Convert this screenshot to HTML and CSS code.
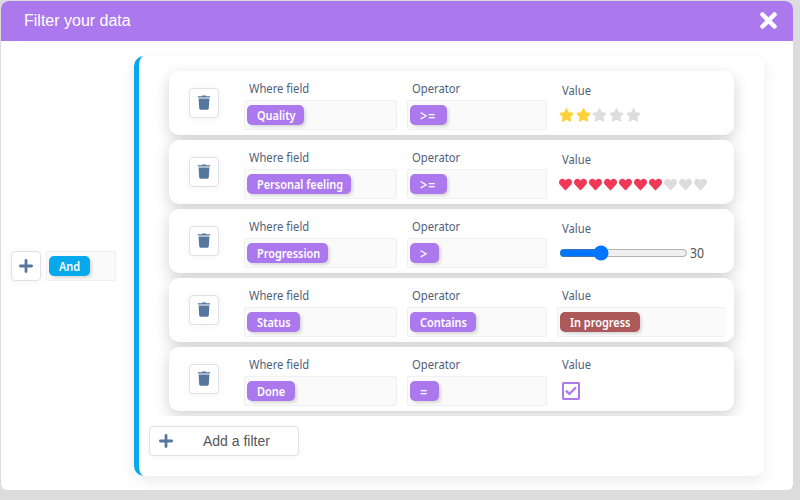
FILE: index.html
```html
<!DOCTYPE html>
<html lang="en">
<head>
<meta charset="utf-8">
<title>Filter your data</title>
<link rel="stylesheet" href="styles.css">
</head>
<body>
<svg width="0" height="0" class="defs">
  <symbol id="trash" viewBox="0 0 14 16"><path d="M4.500 1.200 5.200.5h3.600l.7.700h3.300q.4 0 .4.400v1H.8v-1q0-.4.4-.4zM1.600 3.500h10.800l-.6 9.800q-.1 1.400-1.400 1.400H3.600q-1.300 0-1.400-1.400z"/></symbol>
  <symbol id="plus" viewBox="0 0 12 12"><path d="M6 1.200v9.600M1.200 6h9.600" stroke="currentColor" stroke-width="2.400" stroke-linecap="round"/></symbol>
  <symbol id="star" viewBox="0 0 576 512"><path d="M259.300 17.800 194 150.200 47.900 171.500c-26.200 3.800-36.700 36.100-17.700 54.600l105.700 103-25 145.500c-4.500 26.300 23.200 46 46.400 33.700L288 439.600l130.700 68.700c23.200 12.200 50.900-7.400 46.400-33.700l-25-145.500 105.700-103c19-18.500 8.500-50.800-17.700-54.600L382 150.200 316.700 17.800c-11.700-23.600-45.600-23.900-57.400 0z"/></symbol>
  <symbol id="heart" viewBox="0 0 512 512"><path d="M462.300 62.600C407.500 15.900 326 24.300 275.700 76.200L256 96.500l-19.700-20.300C186.100 24.300 104.500 15.900 49.700 62.600c-62.800 53.600-66.100 149.800-9.900 207.900l193.500 199.800c12.500 12.900 32.800 12.900 45.300 0l193.500-199.800c56.300-58.100 53-154.300-9.800-207.900z"/></symbol>
</svg>
<main class="dialog">
  <header class="bar"><span>Filter your data</span>
    <svg class="close" viewBox="0 0 18 18"><path d="M3.300 3.300l11.400 11.400M14.700 3.300L3.300 14.700"/></svg>
  </header>
  <div class="content">
    <div class="logic">
      <button class="btn"><svg class="plus"><use href="#plus"/></svg></button>
      <div class="field small"><span class="tag blue w-and"><b>And</b></span></div>
    </div>
    <section class="group">
      <div class="rows">
        <article class="card">
          <button class="btn"><svg class="trash"><use href="#trash"/></svg></button>
          <div class="col where"><label>Where field</label><div class="field"><span class="tag w-quality"><b>Quality</b></span></div></div>
          <div class="col op"><label>Operator</label><div class="field"><span class="tag sign w-ge"><b>&gt;=</b></span></div></div>
          <div class="col value low"><label>Value</label><div class="rating stars"><svg class="on"><use href="#star"/></svg><svg class="on"><use href="#star"/></svg><svg><use href="#star"/></svg><svg><use href="#star"/></svg><svg><use href="#star"/></svg></div></div>
        </article>
        <article class="card">
          <button class="btn"><svg class="trash"><use href="#trash"/></svg></button>
          <div class="col where"><label>Where field</label><div class="field"><span class="tag w-feeling"><b>Personal feeling</b></span></div></div>
          <div class="col op"><label>Operator</label><div class="field"><span class="tag sign w-ge"><b>&gt;=</b></span></div></div>
          <div class="col value low"><label>Value</label><div class="rating hearts"><svg class="on"><use href="#heart"/></svg><svg class="on"><use href="#heart"/></svg><svg class="on"><use href="#heart"/></svg><svg class="on"><use href="#heart"/></svg><svg class="on"><use href="#heart"/></svg><svg class="on"><use href="#heart"/></svg><svg class="on"><use href="#heart"/></svg><svg><use href="#heart"/></svg><svg><use href="#heart"/></svg><svg><use href="#heart"/></svg></div></div>
        </article>
        <article class="card">
          <button class="btn"><svg class="trash"><use href="#trash"/></svg></button>
          <div class="col where"><label>Where field</label><div class="field"><span class="tag w-progression"><b>Progression</b></span></div></div>
          <div class="col op"><label>Operator</label><div class="field"><span class="tag sign w-gt"><b>&gt;</b></span></div></div>
          <div class="col value low"><label>Value</label><div class="range"><input type="range" min="0" max="100" value="30"><span>30</span></div></div>
        </article>
        <article class="card">
          <button class="btn"><svg class="trash"><use href="#trash"/></svg></button>
          <div class="col where"><label>Where field</label><div class="field"><span class="tag w-status"><b>Status</b></span></div></div>
          <div class="col op"><label>Operator</label><div class="field"><span class="tag w-contains"><b>Contains</b></span></div></div>
          <div class="col value"><label>Value</label><div class="field open"><span class="tag red w-in"><b>In progress</b></span></div></div>
        </article>
        <article class="card">
          <button class="btn"><svg class="trash"><use href="#trash"/></svg></button>
          <div class="col where"><label>Where field</label><div class="field"><span class="tag w-done"><b>Done</b></span></div></div>
          <div class="col op"><label>Operator</label><div class="field"><span class="tag sign w-gt"><b>=</b></span></div></div>
          <div class="col value"><label>Value</label><svg class="check" viewBox="0 0 18 18"><rect x="1" y="1" width="16" height="16" rx=".7"/><path d="M4 8.700l3.400 3.300L14 5.300"/></svg></div>
        </article>
      </div>
      <button class="btn add"><svg class="plus"><use href="#plus"/></svg><span>Add a filter</span></button>
    </section>
  </div>
</main>
</body>
</html>
```
FILE: styles.css
```css
* { box-sizing: border-box; }
body {
  margin: 0;
  height: 500px;
  overflow: hidden;
  padding: 1px 7px 10px 1px;
  background: #dcdcdc;
  font: 12px/16px "Noto Sans", sans-serif;
  color: #506078;
}
svg { display: block; flex: none; fill: currentColor; }
.defs { position: absolute; }
.dialog {
  height: 489px;
  background: #fff;
  border-radius: 8px 8px 6px 6px;
  overflow: hidden;
}
.bar {
  display: flex;
  align-items: center;
  justify-content: space-between;
  height: 40px;
  padding: 0 15px 0 23px;
  background: #ac78ed;
  color: #fff;
  font: 16px/20px "Liberation Sans", sans-serif;
}
.close { width: 19px; height: 19px; margin-top: -1px; stroke: #fff; stroke-width: 4.300; stroke-linecap: round; fill: none; }
.content { display: flex; padding: 15px 0 14px 10px; }
.logic { display: flex; align-items: center; width: 123px; gap: 5px; }
.btn {
  display: flex;
  align-items: center;
  justify-content: center;
  flex: none;
  width: 30px;
  height: 30px;
  padding: 0 0 1px;
  border: 1px solid #e0e1e4;
  border-radius: 4px;
  background: #fff;
  color: #55779e;
  box-shadow: 0 1px 8px rgba(0, 0, 0, .05);
}
.plus { width: 14px; height: 14px; }
.trash { width: 14px; height: 16px; }
.field {
  height: 30px;
  padding: 4px 2px;
  border: 1px solid #f0f0f2;
  border-radius: 2px;
  background: #fafafa;
}
.small { width: 70px; }
.open { border-right: 0; }
.tag {
  display: block;
  height: 20px;
  padding-left: 10px;
  border-radius: 5px;
  background: #ac78ed;
  color: #fff;
  line-height: 21px;
  white-space: nowrap;
  box-shadow: 2px 2px 3px rgba(0, 0, 0, .13);
}
.tag b { display: inline-block; font-weight: 600; transform: scaleX(.91); transform-origin: left; }
.tag.sign { font-size: 14px; line-height: 22px; }
.tag.sign b { font-weight: 500; letter-spacing: .8px; }
.blue { background: #06a9ec; }
.tag.red { background: #ae5959; }
.w-and { width: 41px; }
.w-quality { width: 57px; }
.w-feeling { width: 104px; }
.w-progression { width: 81px; }
.w-status { width: 53px; }
.w-done { width: 48px; }
.w-contains { width: 66px; }
.w-in { width: 80px; }
.w-ge { width: 37px; }
.w-gt { width: 29px; }
.tag.blue { background: #06a9ec; }
.group {
  width: 630px;
  height: 420px;
  padding-top: 5px;
  border-left: 5px solid #06a9ec;
  border-radius: 10px;
  box-shadow: 0 5px 15px rgba(0, 0, 0, .08);
}
.rows {
  display: flex;
  flex-direction: column;
  gap: 5px;
  height: 355px;
  padding: 10px 30px 5px;
  overflow: hidden;
}
.card {
  display: flex;
  flex: none;
  width: 565px;
  height: 64px;
  padding: 10px 8px 0 20px;
  border-radius: 10px;
  background: #fff;
  box-shadow: 0 5px 15px rgba(0, 0, 0, .18);
}
.card > .btn { margin: 7px 25px 0 0; }
.col { margin-right: 10px; }
.where { width: 153px; }
.op { width: 140px; }
.value { width: 169px; margin-right: 0; }
label {
  display: block;
  height: 19px;
  padding-left: 5px;
  line-height: 16px;
  white-space: nowrap;
  transform: scaleX(.935);
  transform-origin: 5px 0;
}
.low label { position: relative; top: 2px; }
.rating { display: flex; color: #ddd; }
.stars { gap: 1.700px; padding: 8px 0 0 2px; }
.stars svg { width: 15px; height: 14px; }
.stars .on { color: #ffd139; }
.hearts { gap: 2px; padding: 9px 0 0 2px; }
.hearts svg { width: 13px; height: 13px; }
.hearts .on { color: #f03857; }
.range { display: flex; align-items: center; height: 30px; padding-left: 2px; gap: 2px; font-size: 14px; color: #555; }
.range input { width: 129px; height: 16px; margin: 0; accent-color: #0075ff; }
.range span { transform: scaleX(.88); transform-origin: left; }
.check { width: 18px; height: 18px; margin: 6px 0 0 5px; fill: none; stroke: #ac78ed; stroke-width: 2; }
.check path { stroke-width: 2.300; }
.add {
  justify-content: flex-start;
  width: 150px;
  margin: 10px 0 0 10px;
  padding-left: 9px;
  font: 14px/18px "Liberation Sans", sans-serif;
}
.add span { margin-left: 30px; color: #555; }
```
